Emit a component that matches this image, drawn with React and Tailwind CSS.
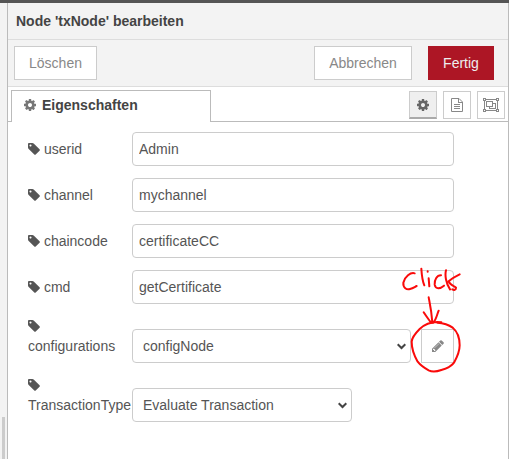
const fields = [
  { id: "userid", value: "Admin" },
  { id: "channel", value: "mychannel" },
  { id: "chaincode", value: "certificateCC" },
  { id: "cmd", value: "getCertificate" },
];

const controlBox = "h-[34px] rounded border border-[#ccc] bg-white text-[#555] outline-none";
const tabButton = "flex size-7 items-center justify-center border border-[#ccc] text-[#888]";

function CogIcon({ className }) {
  return (
    <svg className={className} viewBox="128 128 1536 1536" fill="currentColor" aria-hidden="true">
      <path d="M1152 896q0-106-75-181t-181-75-181 75-75 181 75 181 181 75 181-75 75-181zm512-109v222q0 12-8 23t-20 13l-185 28q-19 54-39 91 35 50 107 138 10 12 10 25t-9 23q-27 37-99 108t-94 71q-12 0-26-9l-138-108q-44 23-91 38-16 136-29 186-7 28-36 28h-222q-14 0-24.5-8.5t-11.5-21.5l-28-184q-49-16-90-37l-141 107q-10 9-25 9-14 0-25-11-126-114-165-168-7-10-7-23 0-12 8-23 15-21 51-66.5t54-70.5q-27-50-41-99l-183-27q-13-2-21-12.5t-8-23.5v-222q0-12 8-23t19-13l186-28q14-46 39-92-40-57-107-138-10-12-10-24 0-10 9-23 26-36 98.5-107.5t94.5-71.5q13 0 26 10l138 107q44-23 91-38 16-136 29-186 7-28 36-28h222q14 0 24.5 8.5t11.5 21.5l28 184q49 16 90 37l142-107q9-9 24-9 13 0 25 10 129 119 165 170 7 8 7 22 0 12-8 23-15 21-51 66.5t-54 70.5q26 50 41 98l183 28q13 2 21 12.5t8 23.5z" />
    </svg>
  );
}

function TagIcon({ className }) {
  return (
    <svg className={className} viewBox="128 128 1536 1536" fill="currentColor" aria-hidden="true">
      <path d="M576 448q0-53-37.5-90.5t-90.5-37.5-90.5 37.5-37.5 90.5 37.5 90.5 90.5 37.5 90.5-37.5 37.5-90.5zm1067 576q0 53-37 90l-491 492q-39 37-91 37-53 0-90-37l-715-716q-38-37-64.5-101t-26.5-117v-416q0-52 38-90t90-38h416q53 0 117 26.5t102 64.5l715 714q37 39 37 91z" />
    </svg>
  );
}

function PencilIcon({ className }) {
  return (
    <svg className={className} viewBox="128 128 1536 1536" fill="currentColor" aria-hidden="true">
      <path d="M491 1536l91-91-235-235-91 91v107h128v128h107zm523-928q0-22-22-22-10 0-17 7l-542 542q-7 7-7 17 0 22 22 22 10 0 17-7l542-542q7-7 7-17zm-54-192l416 416-832 832h-416v-416zm683 96q0 53-37 90l-166 166-416-416 166-165q36-38 90-38 53 0 91 38l235 234q37 39 37 91z" />
    </svg>
  );
}

function FileIcon() {
  return (
    <svg className="h-3.5 w-3" viewBox="0 0 12 14" fill="none" stroke="currentColor" shapeRendering="crispEdges">
      <path d="M.5 .5H8L11.5 4V13.5H.5Z" shapeRendering="auto" />
      <path d="M7.5 .5V4.5H11.5M3 6.5H9M3 8.5H9M3 10.5H9" />
    </svg>
  );
}

function GroupIcon() {
  return (
    <svg className="h-3.5 w-4" viewBox="0 0 16 14" fill="none" stroke="currentColor" shapeRendering="crispEdges">
      <path d="M3 1.5H13M3 12.5H13M1.5 3V11M14.5 3V11" />
      <path d="M.5 .5H2.5V2.5H.5ZM13.5 .5H15.5V2.5H13.5ZM.5 11.5H2.5V13.5H.5ZM13.5 11.5H15.5V13.5H13.5Z" />
      <path d="M3.5 3.5H9.5V8.5H3.5ZM10 5.5H12.5V10.5H6.5V9" />
    </svg>
  );
}

function Chevron() {
  return (
    <svg
      className="pointer-events-none absolute right-[5px] top-3.5 h-[7px] w-[9px]"
      viewBox="0 0 9 7"
      fill="none"
      stroke="#444"
      strokeWidth="2"
    >
      <path d="M.7 1.2L4.5 5L8.3 1.2" />
    </svg>
  );
}

function ClickNote() {
  return (
    <svg
      className="pointer-events-none absolute -left-[21px] -top-[69px] h-[120px] w-20 max-w-none"
      viewBox="90 0 240 360"
      fill="none"
      stroke="#fa0a0a"
      strokeWidth="6"
      strokeLinecap="round"
      strokeLinejoin="round"
      role="img"
      aria-label="click"
    >
      <path d="M134 40C122 36 104 50 100 68C99 84 110 90 120 87C128 85 134 81 140 78" />
      <path d="M154 26C155 42 156 60 163 76" />
      <path d="M176 55L178 79M173 34L173 35" />
      <path d="M213 46C200 46 193 60 194 74C197 89 210 87 222 77" />
      <path d="M228 31C224 46 228 70 240 88M269 43C258 48 244 57 236 64C240 76 254 78 258 83C258 90 252 91 247 88" />
      <path d="M176 112C179 128 184 148 187 187M161 157C168 168 176 178 183 188L190 188C198 180 201 164 206 152" />
      <path d="M214 187C190 184 165 192 149 207C138 218 126 231 125 245C125 264 131 284 143 305C150 314 163 324 176 331C186 336 200 335 214 330C230 326 243 320 252 308C260 294 269 278 269 256C269 233 264 216 248 203C236 194 220 189 202 188" />
    </svg>
  );
}

function Row({ id, children }) {
  return (
    <div className="flex items-end gap-1">
      <label htmlFor={id} className="w-[100px] shrink-0 pb-[7px] leading-5">
        <TagIcon className="inline size-3 align-[-1px]" /> {id}
      </label>
      {children}
    </div>
  );
}

function Select({ id, value, className }) {
  return (
    <div className={className}>
      <select id={id} className={`${controlBox} w-full appearance-none pl-2.5 pr-6`}>
        <option>{value}</option>
      </select>
      <Chevron />
    </div>
  );
}

export default function App() {
  return (
    <div className="flex min-h-screen flex-col border-t-[3px] border-[#555] bg-white font-['Liberation_Sans',Arial,sans-serif] text-sm text-[#555]">
      <div className="flex flex-1">
        <div className="flex w-2 shrink-0 flex-col justify-end border-r border-[#bbb] bg-[#f3f3f3]">
          <div className="ml-0.5 h-[42px] w-[3px] bg-[#ccc]" />
        </div>
        <main className="min-w-0 flex-1 border-r border-[#bbb]">
          <h1 className="border-b border-[#ddd] bg-[#f3f3f3] px-2 py-2 font-bold leading-5 text-[#444]">
            Node 'txNode' bearbeiten
          </h1>
          <div className="flex border-b border-[#ddd] bg-[#f3f3f3] pb-1.5 pl-1.5 pr-3.5 pt-1.5 text-[#888]">
            <button className="h-[34px] w-[83px] border border-[#ccc] bg-white">Löschen</button>
            <button className="ml-auto h-[34px] w-[98px] border border-[#ccc] bg-white">Abbrechen</button>
            <button className="ml-4 h-[34px] w-[66px] bg-[#ad1625] text-[#eee]">Fertig</button>
          </div>
          <div className="flex h-[35px] items-end pt-[3px]">
            <div className="w-[3px] self-stretch border-b border-[#bbb]" />
            <button className="flex h-8 w-[200px] items-center gap-[6px] border border-b-0 border-[#bbb] pb-1 pl-3 font-bold text-[#444]">
              <CogIcon className="size-3 text-[#777]" />
              Eigenschaften
            </button>
            <div className="flex flex-1 items-start justify-end gap-1.5 self-stretch border-b border-[#bbb] pr-[3px] pt-px">
              <button aria-label="Eigenschaften" className={`${tabButton} border-b-2 border-b-[#aaa] bg-[#efefef]`}>
                <CogIcon className="size-3 text-[#666]" />
              </button>
              <button aria-label="Beschreibung" className={tabButton}>
                <FileIcon />
              </button>
              <button aria-label="Darstellung" className={tabButton}>
                <GroupIcon />
              </button>
            </div>
          </div>
          <form className="flex flex-col gap-3 pb-9 pl-5 pr-[54px] pt-2.5">
            {fields.map((field) => (
              <Row key={field.id} id={field.id}>
                <input id={field.id} defaultValue={field.value} className={`${controlBox} min-w-0 flex-1 px-1.5`} />
              </Row>
            ))}
            <Row id="configurations">
              <Select id="configurations" value="configNode" className="relative min-w-0 flex-1" />
              <div className="relative ml-1.5">
                <button
                  type="button"
                  aria-label="Bearbeiten"
                  className="flex h-[34px] w-[33px] items-center justify-center border border-[#ccc] bg-white text-[#888]"
                >
                  <PencilIcon className="size-3" />
                </button>
                <ClickNote />
              </div>
            </Row>
            <Row id="TransactionType">
              <Select id="TransactionType" value="Evaluate Transaction" className="relative w-[220px]" />
            </Row>
          </form>
        </main>
      </div>
    </div>
  );
}
